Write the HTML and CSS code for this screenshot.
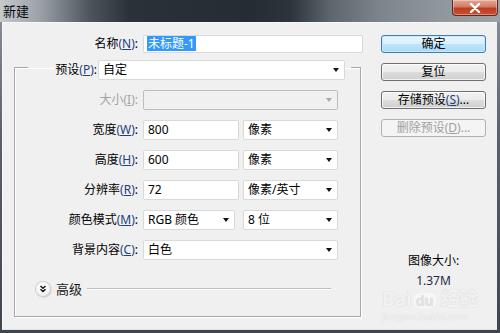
FILE: index.html
```html
<!DOCTYPE html>
<html lang="zh">
<head>
<meta charset="utf-8">
<title>新建</title>
<link rel="stylesheet" href="styles.css">
</head>
<body>
<div class="window">
  <div class="titlebar">
    <span class="title">新建</span>
    <div class="close">
      <svg width="12" height="10" viewBox="0 0 12 10"><path d="M2 1 L10 9 M10 1 L2 9" stroke="#fff" stroke-width="2.4" stroke-linecap="round"/></svg>
    </div>
  </div>
  <div class="body">
    <div class="main">
      <div class="name-row">
        <label class="lbl name-lbl">名称<span class="mn">(<u>N</u>)</span>:</label>
        <div class="input name-field"><span class="sel">未标题-1</span></div>
      </div>
      <fieldset class="group">
        <legend class="preset">
          <label class="lbl preset-lbl">预设<span class="mn">(<u>P</u>)</span>:</label>
          <div class="select preset-select"><span>自定</span><i class="arr"></i></div>
        </legend>
        <div class="rows">
          <div class="frow">
            <label class="lbl dis">大小(<u>I</u>):</label>
            <div class="select disabled w-full"><span></span><i class="arr arr-dis"></i></div>
          </div>
          <div class="frow">
            <label class="lbl">宽度<span class="mn">(<u>W</u>)</span>:</label>
            <div class="input w-num">800</div>
            <div class="select w-unit"><span>像素</span><i class="arr"></i></div>
          </div>
          <div class="frow">
            <label class="lbl">高度<span class="mn">(<u>H</u>)</span>:</label>
            <div class="input w-num">600</div>
            <div class="select w-unit"><span>像素</span><i class="arr"></i></div>
          </div>
          <div class="frow">
            <label class="lbl">分辨率<span class="mn">(<u>R</u>)</span>:</label>
            <div class="input w-num">72</div>
            <div class="select w-unit"><span>像素/英寸</span><i class="arr"></i></div>
          </div>
          <div class="frow">
            <label class="lbl">颜色模式<span class="mn">(<u>M</u>)</span>:</label>
            <div class="select w-mode"><span>RGB 颜色</span><i class="arr"></i></div>
            <div class="select w-depth"><span>8 位</span><i class="arr"></i></div>
          </div>
          <div class="frow">
            <label class="lbl">背景内容<span class="mn">(<u>C</u>)</span>:</label>
            <div class="select w-full"><span>白色</span><i class="arr"></i></div>
          </div>
        </div>
        <div class="advanced">
          <span class="adv-icon">
            <svg width="14" height="14" viewBox="0 0 14 14"><path d="M4.5 4 L7 6.3 L9.5 4 M4.5 7.3 L7 9.6 L9.5 7.3" fill="none" stroke="#1a1a1a" stroke-width="1.5"/></svg>
          </span>
          <span class="adv-text">高级</span>
          <span class="adv-line"></span>
        </div>
      </fieldset>
    </div>
    <div class="side">
      <div class="btn default">确定</div>
      <div class="btn">复位</div>
      <div class="btn">存储预设<span class="mn">(<u>S</u>)</span>...</div>
      <div class="btn disabled-btn">删除预设(<u>D</u>)...</div>
      <div class="info-label">图像大小:</div>
      <div class="info-value">1.37M</div>
    </div>
  </div>
  <div class="watermark">
    <div class="wm-big">Bai<span class="wm-du">du</span> 经验</div>
    <div class="wm-small">jingyan.baidu.com</div>
  </div>
</div>
</body>
</html>
```

FILE: styles.css
```css
html, body {
  margin: 0;
  padding: 0;
}
body {
  width: 500px;
  height: 333px;
  overflow: hidden;
  font-family: "Noto Sans", "Noto Sans CJK SC", sans-serif;
  font-size: 12px;
  color: #000;
}
.window {
  position: relative;
  width: 500px;
  height: 333px;
  background: linear-gradient(to bottom, #8d949b 0%, #5b626a 40%, #3e454d 100%);
  display: flex;
  flex-direction: column;
}
.titlebar {
  height: 22px;
  flex: none;
  display: flex;
  align-items: flex-start;
  background: linear-gradient(to right, #c6cacf 0%, #9ba1a7 8%, #4d545c 18%, #2a3139 26%, #252c34 50%, #2c333b 58%, #5d656d 66%, #7d858c 76%, #8f969c 88%, #9ca2a8 100%);
}
.title {
  padding-left: 3px;
  line-height: 23px;
  font-size: 13px;
  color: #0a0a0a;
}
.close {
  margin-left: auto;
  margin-right: 2px;
  width: 46px;
  height: 16px;
  box-sizing: border-box;
  border: 1px solid #5a2a22;
  border-top: none;
  border-radius: 0 0 4px 4px;
  background: linear-gradient(to bottom, #e3a795 0%, #d17d66 45%, #bf3c22 55%, #c9502f 100%);
  display: flex;
  align-items: center;
  justify-content: center;
  box-shadow: inset 0 0 0 1px rgba(255,255,255,0.35);
}
.body {
  flex: 1;
  margin: 0 3px 3px 2px;
  background: #f0f0f0;
  border-top: 1px solid #f8f8f8;
  border-left: 1px solid #f8f8f8;
  border-bottom: 1px solid #e2e2e2;
  display: flex;
  min-height: 0;
}
.main {
  width: 349px;
  padding: 12px 0 0 11px;
  flex: none;
}
.lbl {
  display: block;
  text-align: right;
  line-height: 18px;
  white-space: nowrap;
}
.mn {
  color: #24407c;
}
.dis {
  color: #a3a3a3;
}
u {
  text-decoration: underline;
  text-underline-offset: 1px;
}
.name-row {
  display: flex;
  align-items: center;
  height: 18px;
}
.name-lbl {
  width: 124px;
  margin-right: 5px;
}
.input, .select {
  box-sizing: border-box;
  height: 20px;
  background: #fff;
  border: 1px solid #d9d9d9;
  border-radius: 2px;
  line-height: 18px;
  padding-left: 4px;
  white-space: nowrap;
}
.name-field {
  width: 220px;
  height: 18px;
  line-height: 16px;
  padding-left: 3px;
}
.sel {
  background: #3399ff;
  color: #fff;
  padding: 0 1px;
  display: inline-block;
  line-height: 15px;
}
.select {
  display: flex;
  align-items: center;
  justify-content: space-between;
  padding-right: 5px;
}
.arr {
  display: block;
  width: 0;
  height: 0;
  border-left: 3.5px solid transparent;
  border-right: 3.5px solid transparent;
  border-top: 4px solid #111;
}
.arr-dis {
  border-top-color: #a8a8a8;
}
.select.disabled {
  background: #f0f0f0;
  border-color: #bdbdbd;
}
.group {
  box-sizing: border-box;
  width: 347px;
  margin: 1px 0 0 0;
  padding: 10px 0 20px 0;
  border: 1px solid #a6a6a6;
  box-shadow: inset 1px 1px 0 #fff, 1px 1px 0 #fff;
  min-width: 0;
}
.preset {
  margin-left: 13px;
  padding: 6px 6px 0 0;
  display: flex;
  align-items: center;
}
.preset-lbl {
  width: 69px;
  margin-right: 1px;
}
.preset-select {
  width: 247px;
}
.rows {
  display: flex;
  flex-direction: column;
  gap: 10px;
}
.frow {
  display: flex;
  align-items: center;
  height: 20px;
}
.frow .lbl {
  width: 123px;
  margin-right: 5px;
}
.w-full { width: 195px; }
.w-num { width: 96px; }
.w-unit { width: 95px; margin-left: 4px; }
.w-mode { width: 92px; }
.w-depth { width: 95px; margin-left: 8px; }
.advanced {
  margin-top: 22px;
  height: 14px;
  display: flex;
  align-items: center;
}
.adv-icon {
  margin-left: 21px;
  width: 14px;
  height: 14px;
  border-radius: 50%;
  background: radial-gradient(circle at 50% 35%, #ffffff 0%, #f4f4f4 60%, #dcdcdc 100%);
  box-shadow: 0 0 0 1px #cfcfcf, 1px 1px 2px rgba(0,0,0,0.25);
  display: flex;
}
.adv-text {
  margin-left: 6px;
  line-height: 14px;
  font-size: 13px;
  color: #1a1a1a;
}
.adv-line {
  margin-left: 5px;
  width: 244px;
  height: 1px;
  background: #bdbdbd;
  border-bottom: 1px solid #fff;
}
.side {
  margin-left: 18px;
  width: 105px;
  padding-top: 12px;
  display: flex;
  flex-direction: column;
  gap: 10px;
}
.btn {
  box-sizing: border-box;
  height: 18px;
  border: 1px solid #707070;
  border-radius: 3px;
  background: linear-gradient(to bottom, #f2f2f2 0%, #ebebeb 50%, #dddddd 51%, #cfcfcf 100%);
  box-shadow: inset 0 0 0 1px rgba(255,255,255,0.7);
  text-align: center;
  line-height: 16px;
  white-space: nowrap;
}
.btn.default {
  border-color: #3c7fb1;
  background: linear-gradient(to bottom, #eaf6fd 0%, #d9f0fc 50%, #bee6fd 51%, #a7d9f5 100%);
  box-shadow: inset 0 0 0 1px #c6e8fb;
}
.btn.disabled-btn {
  border-color: #adb2b5;
  background: #f4f4f4;
  color: #a0a0a0;
  box-shadow: none;
}
.info-label {
  margin-top: 106px;
  text-align: center;
  line-height: 16px;
}
.info-value {
  margin-top: -5px;
  text-align: center;
  line-height: 14px;
  color: #1e2c48;
}
.watermark {
  position: absolute;
  left: 382px;
  top: 291px;
  color: rgba(255,255,255,0.75);
  text-shadow: 0 0 1px rgba(160,160,160,0.5);
  pointer-events: none;
}
.wm-big {
  font-family: "Noto Sans", "Noto Sans CJK SC", sans-serif;
  font-weight: bold;
  font-size: 19px;
  line-height: 17px;
  white-space: nowrap;
}
.wm-du {
  display: inline-block;
  font-size: 14px;
  line-height: 15px;
  padding: 0 2px;
  margin-left: 2px;
  border-radius: 6px;
  background: rgba(255,255,255,0.55);
  color: rgba(230,230,230,0.9);
}
.wm-small {
  font-size: 9px;
  line-height: 12px;
  letter-spacing: 0.5px;
  margin-top: 3px;
}
```
